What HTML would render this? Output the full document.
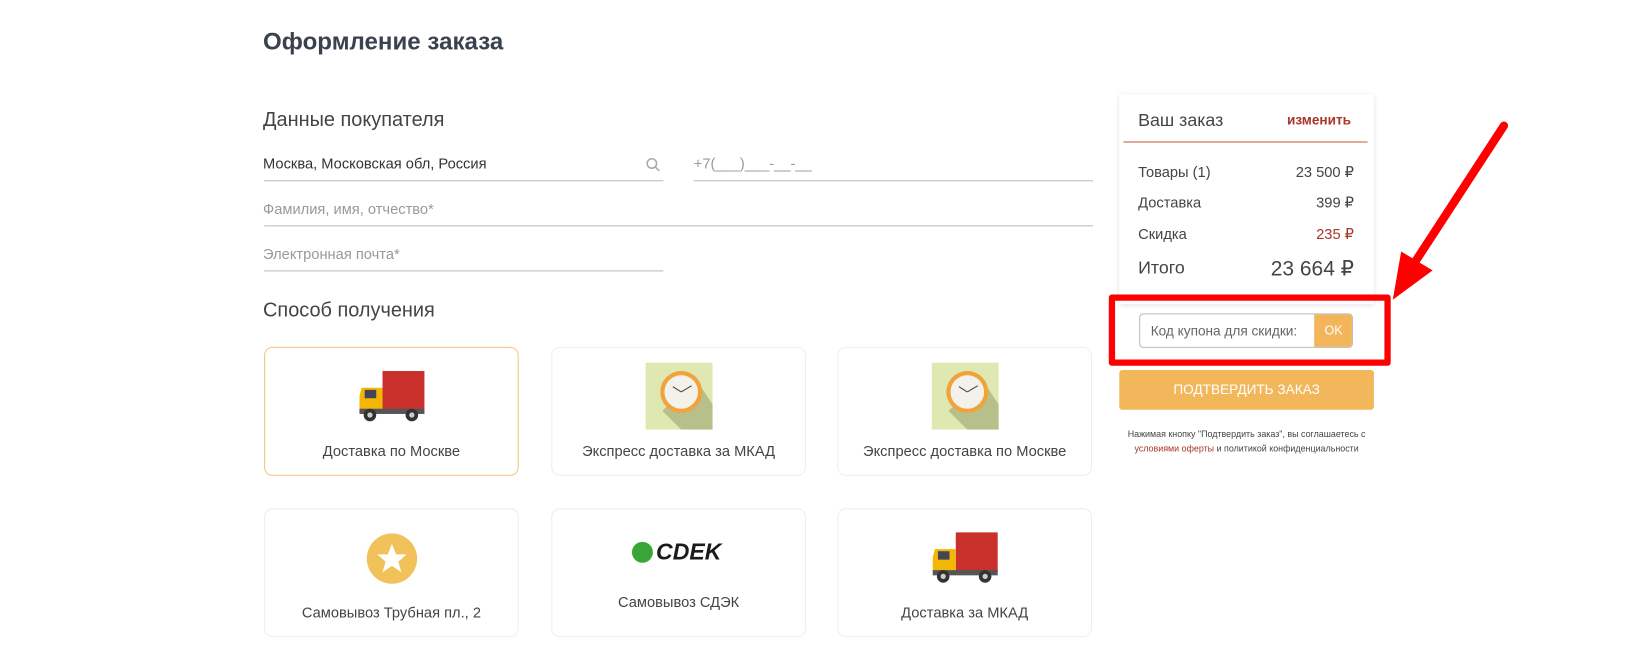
<!DOCTYPE html>
<html><head><meta charset="utf-8">
<style>
html,body{margin:0;padding:0;background:#fff;width:1635px;height:655px;overflow:hidden}
#w{position:absolute;left:0;top:0;width:1560px;height:625px;transform:scale(1.048);transform-origin:0 0;font-family:"Liberation Sans","DejaVu Sans",sans-serif;color:#444}
.a{position:absolute;white-space:nowrap}
.line{position:absolute;height:1px;background:#bbb}
.card{position:absolute;width:243px;height:123px;border:1px solid #eee;border-radius:8px;box-sizing:border-box;background:#fff}
.card .t{position:absolute;left:0;right:0;top:90px;text-align:center;font-size:14px;color:#444}
.ic{position:absolute;left:50%;transform:translateX(-50%)}
#r{position:absolute;left:-5px;top:-2px;width:1560px;height:625px}
</style></head><body><div id="w">
<div class="a" style="left:251px;top:26px;font-size:23px;font-weight:bold;color:#3a4250">Оформление заказа</div>
<div class="a" style="left:251px;top:104px;font-size:19px;color:#444">Данные покупателя</div>
<div class="a" style="left:251px;top:148px;font-size:14px;color:#333">Москва, Московская обл, Россия</div>
<svg class="a" style="left:616px;top:150px" width="14" height="14"><circle cx="6" cy="6" r="4.5" fill="none" stroke="#aaa" stroke-width="1.5"/><line x1="9.5" y1="9.5" x2="13" y2="13" stroke="#aaa" stroke-width="1.5"/></svg>
<div class="line" style="left:252px;top:172px;width:381px"></div>
<div class="a" style="left:662px;top:148px;font-size:14px;color:#999">+7(___)___-__-__</div>
<div class="line" style="left:662px;top:172px;width:381px"></div>
<div class="a" style="left:251px;top:191px;font-size:14px;color:#999">Фамилия, имя, отчество*</div>
<div class="line" style="left:252px;top:215px;width:791px"></div>
<div class="a" style="left:251px;top:234px;font-size:14px;color:#999">Электронная почта*</div>
<div class="line" style="left:252px;top:258px;width:381px"></div>
<div class="a" style="left:251px;top:286px;font-size:19px;color:#444">Способ получения</div>

<div class="card" style="left:252px;top:331px;border-color:#edc77a">
 <svg class="ic" style="top:20px" width="66" height="52"><rect x="24" y="2" width="40" height="38" fill="#c9302c"/><path d="M4 18h20v22H2V26z" fill="#f2b705"/><rect x="7" y="20" width="11" height="8" fill="#445"/><rect x="2" y="38" width="62" height="5" fill="#555"/><circle cx="12" cy="44" r="6" fill="#333"/><circle cx="12" cy="44" r="2.5" fill="#ccc"/><circle cx="52" cy="44" r="6" fill="#333"/><circle cx="52" cy="44" r="2.5" fill="#ccc"/></svg>
 <div class="t">Доставка по Москве</div></div>
<div class="card" style="left:526px;top:331px">
 <svg class="ic" style="top:14px" width="64" height="64"><rect width="64" height="64" fill="#dfe8b0"/><path d="M16 46L34 64H64V40L48 16z" fill="#b7bf8a"/><circle cx="34" cy="28" r="20" fill="#f0a33a"/><circle cx="34" cy="28" r="16" fill="#f4f1ea"/><path d="M34 28l-8-5M34 28l10-6" stroke="#444" stroke-width="1"/></svg>
 <div class="t">Экспресс доставка за МКАД</div></div>
<div class="card" style="left:799px;top:331px">
 <svg class="ic" style="top:14px" width="64" height="64"><rect width="64" height="64" fill="#dfe8b0"/><path d="M16 46L34 64H64V40L48 16z" fill="#b7bf8a"/><circle cx="34" cy="28" r="20" fill="#f0a33a"/><circle cx="34" cy="28" r="16" fill="#f4f1ea"/><path d="M34 28l-8-5M34 28l10-6" stroke="#444" stroke-width="1"/></svg>
 <div class="t">Экспресс доставка по Москве</div></div>
<div class="card" style="left:252px;top:485px">
 <svg class="ic" style="top:22px" width="50" height="50"><circle cx="25" cy="25" r="24" fill="#f1c25a"/><path d="M25 11l4 10h10l-8 7 3 10-9-6-9 6 3-10-8-7h10z" fill="#fff"/></svg>
 <div class="t">Самовывоз Трубная пл., 2</div></div>
<div class="card" style="left:526px;top:485px">
 <div class="a" style="left:76px;top:28px;font-size:22px;font-weight:bold;font-style:italic;color:#1b1b1b"><span style="display:inline-block;width:20px;height:20px;border-radius:50%;background:#3aa537;vertical-align:-3px;margin-right:3px"></span>CDEK</div>
 <div class="t" style="top:80px">Самовывоз СДЭК</div></div>
<div class="card" style="left:799px;top:485px">
 <svg class="ic" style="top:20px" width="66" height="52"><rect x="24" y="2" width="40" height="38" fill="#c9302c"/><path d="M4 18h20v22H2V26z" fill="#f2b705"/><rect x="7" y="20" width="11" height="8" fill="#445"/><rect x="2" y="38" width="62" height="5" fill="#555"/><circle cx="12" cy="44" r="6" fill="#333"/><circle cx="12" cy="44" r="2.5" fill="#ccc"/><circle cx="52" cy="44" r="6" fill="#333"/><circle cx="52" cy="44" r="2.5" fill="#ccc"/></svg>
 <div class="t">Доставка за МКАД</div></div>

<div id="r">
<div class="a" style="left:1073px;top:92px;width:243px;height:200px;box-shadow:0 1px 5px rgba(0,0,0,.12);background:#fff"></div>
<div class="a" style="left:1091px;top:107px;font-size:17px;color:#444">Ваш заказ</div>
<div class="a" style="left:1233px;top:109px;font-size:13px;font-weight:bold;color:#a8342a">изменить</div>
<div class="line" style="left:1077px;top:137px;width:233px;background:#c8603c"></div>
<div class="a" style="left:1091px;top:158px;font-size:14px">Товары (1)</div><div class="a" style="right:263px;top:158px;font-size:14px">23 500 ₽</div>
<div class="a" style="left:1091px;top:187px;font-size:14px">Доставка</div><div class="a" style="right:263px;top:187px;font-size:14px">399 ₽</div>
<div class="a" style="left:1091px;top:217px;font-size:14px">Скидка</div><div class="a" style="right:263px;top:217px;font-size:14px;color:#a8342a">235 ₽</div>
<div class="a" style="left:1091px;top:248px;font-size:17px">Итого</div><div class="a" style="right:263px;top:246px;font-size:20px">23 664 ₽</div>
<div class="a" style="left:1063px;top:283px;width:269px;height:68px;box-sizing:border-box;border:6px solid #f00;border-radius:3px"></div>
<div class="a" style="left:1092px;top:301px;width:204px;height:33px;box-sizing:border-box;border:1px solid #bbb;border-radius:4px;overflow:hidden;background:#fff">
 <span class="a" style="left:10px;top:8px;font-size:13px;color:#666">Код купона для скидки:</span>
 <span class="a" style="right:-1px;top:-1px;width:37px;height:33px;background:#f2b55a;color:#fff;font-size:12px;text-align:center;line-height:33px">OK</span></div>
<div class="a" style="left:1073px;top:355px;width:243px;height:38px;background:#f2b75b;border-radius:3px;color:#fff;font-size:13px;text-align:center;line-height:38px">ПОДТВЕРДИТЬ ЗАКАЗ</div>
<div class="a" style="left:1073px;top:409px;width:243px;text-align:center;font-size:8.5px;color:#444;line-height:14px">Нажимая кнопку "Подтвердить заказ", вы соглашаетесь с<br><span style="color:#a8342a">условиями оферты</span> и политикой конфиденциальности</div>
<svg class="a" style="left:1320px;top:110px" width="140" height="190"><line x1="120" y1="12" x2="30" y2="150" stroke="#f00" stroke-width="8" stroke-linecap="round"/><path d="M14 178L22 132L52 150z" fill="#f00"/></svg>
</div>
</div></body></html>
